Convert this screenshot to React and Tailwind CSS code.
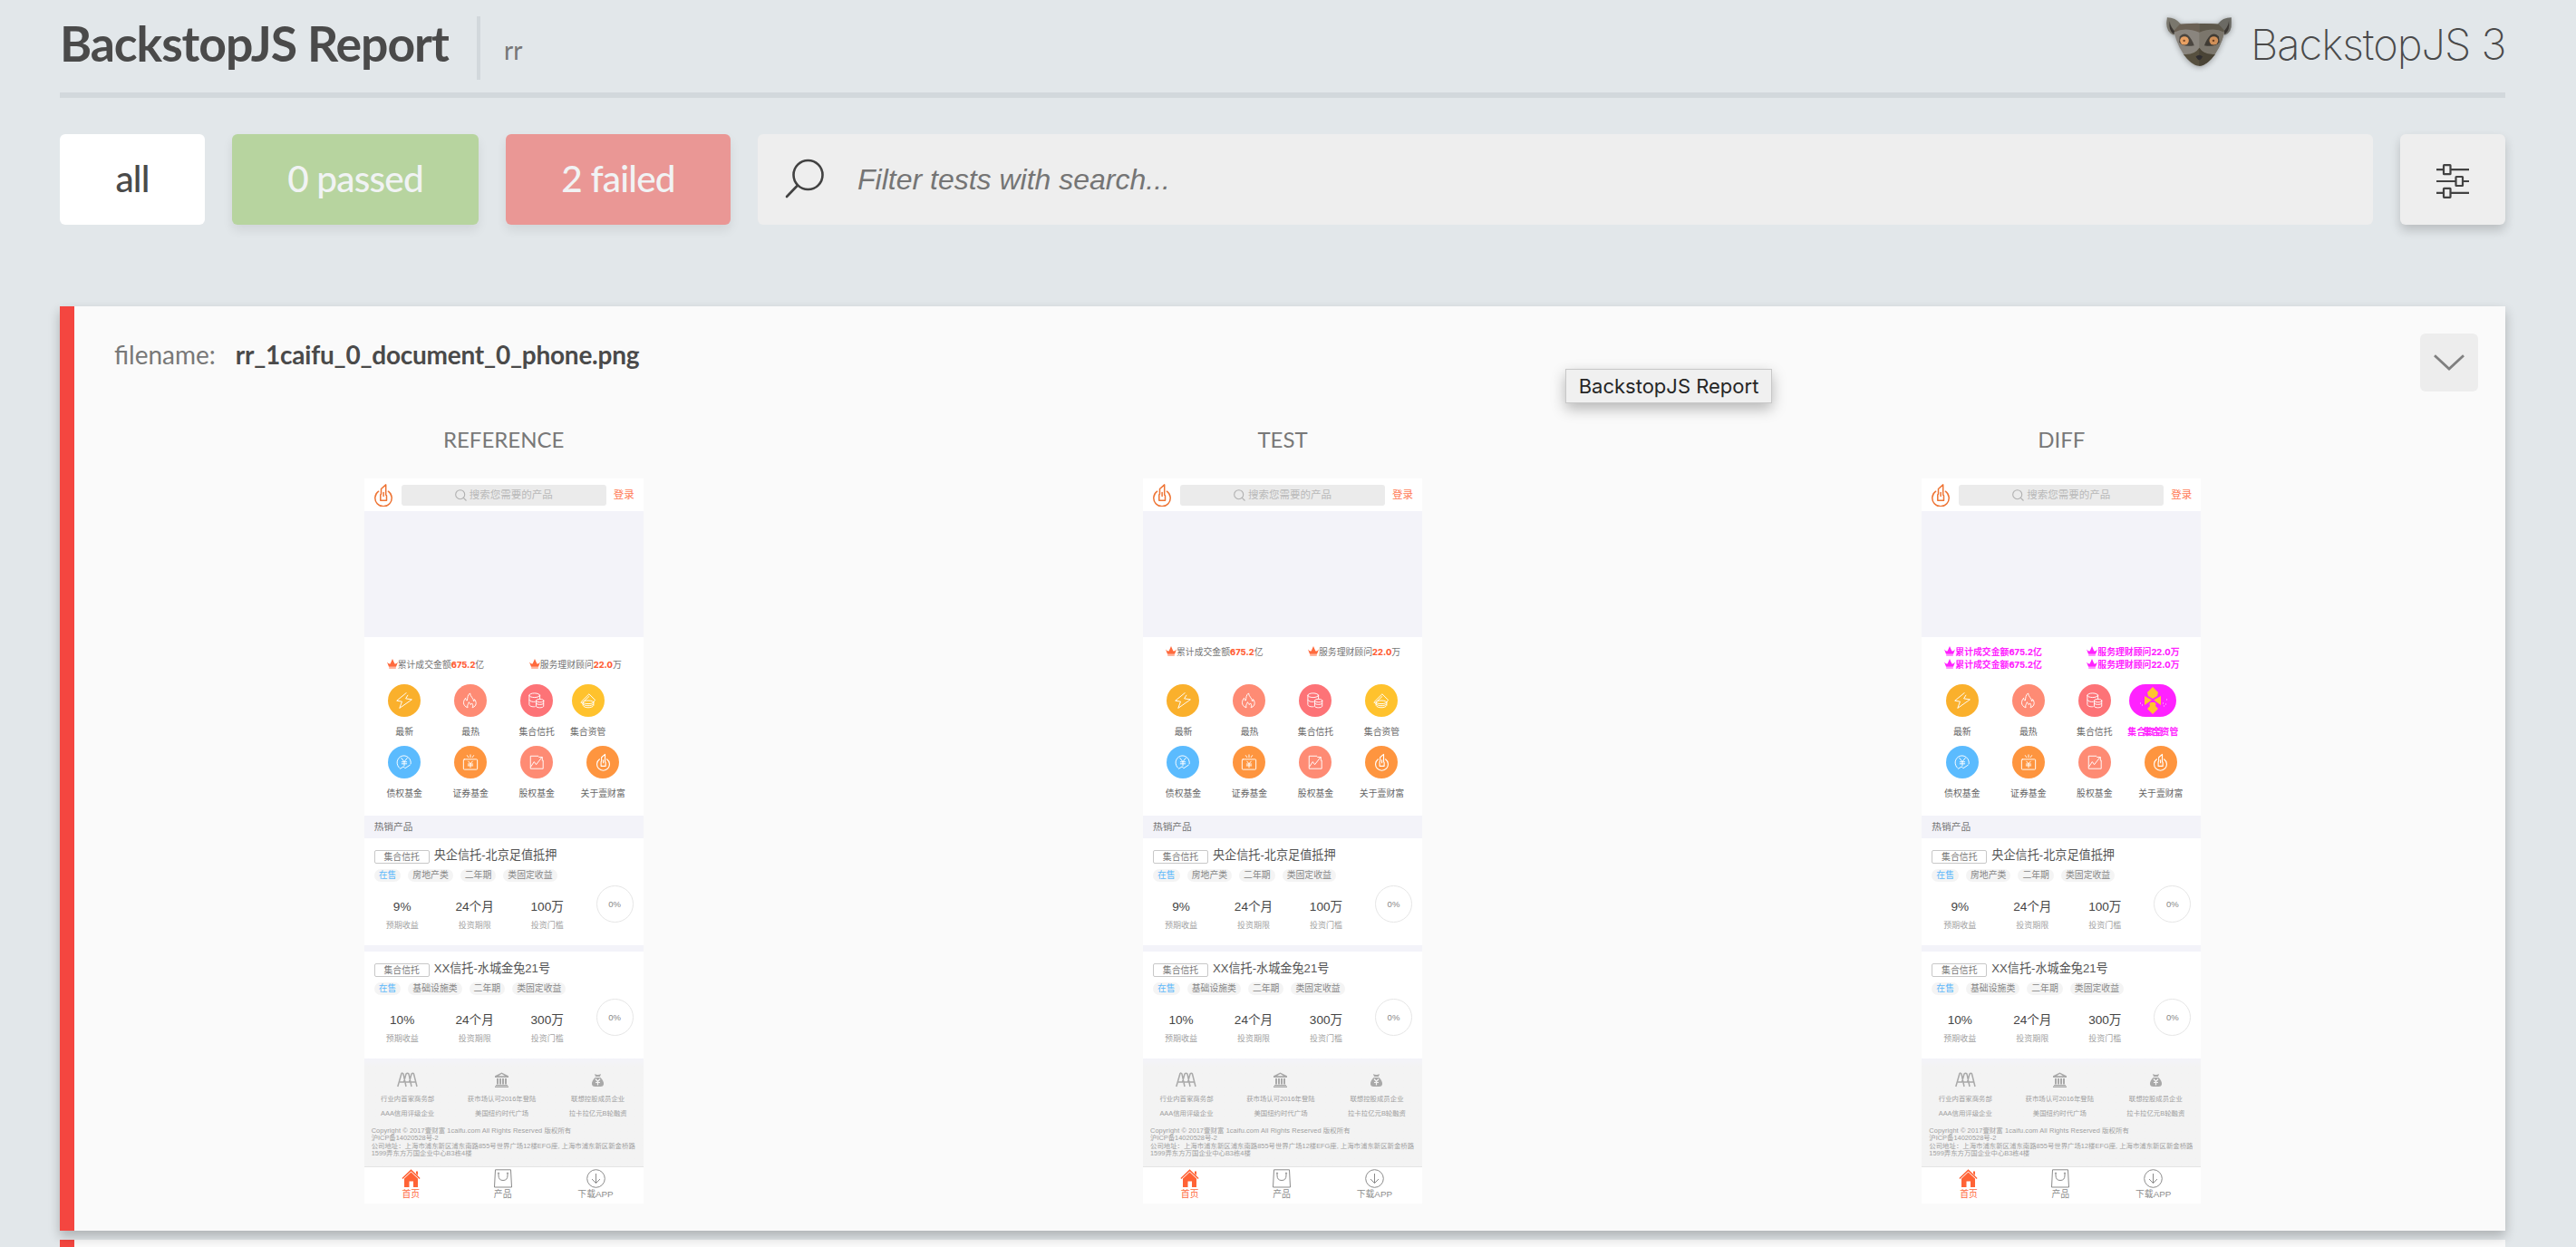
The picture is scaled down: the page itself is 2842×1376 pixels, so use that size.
import React from "react";

const CJK = "font-['Liberation_Sans','Noto_Sans_CJK_SC',sans-serif]";

function LemurLogo() {
  return (
    <svg className="w-[80px] h-[62px] drop-shadow-[0_1px_3px_rgba(0,0,0,0.35)]" viewBox="250 50 230 185" preserveAspectRatio="none">
      <path d="M264 60 Q290 60 308 82 L285 118 Q262 108 262 78 Z" fill="#7a776d" />
      <path d="M468 60 Q440 60 424 82 L447 118 Q470 108 468 78 Z" fill="#6b6a64" />
      <path d="M272 72 Q274 92 292 110 L284 114 Q268 102 272 72 Z" fill="#3b3733" />
      <path d="M460 72 Q458 92 440 110 L448 114 Q464 102 460 72 Z" fill="#3b3733" />
      <path d="M304 82 Q366 78 428 82 L446 108 Q434 160 404 196 Q384 219 366 219 Q348 219 328 196 Q298 160 286 108 Z" fill="#8a857e" />
      <path d="M366 80 Q400 79 428 82 L446 108 Q434 160 404 196 Q384 219 366 219 Z" fill="#7b766c" />
      <path d="M304 82 Q366 78 366 80 V109 Q320 90 288 108 L287 102 Z" fill="#6b6154" />
      <path d="M366 80 Q400 79 428 82 L445 102 L444 108 Q412 90 366 109 Z" fill="#5d574a" />
      <path d="M366 160 Q352 184 316 181 Q342 218 366 219 Q390 218 416 181 Q380 184 366 160 Z" fill="#57503f" />
      <path d="M366 160 Q380 184 416 181 Q390 218 366 219 Z" fill="#4a4436" />
      <path d="M304 122 Q316 108 330 118 Q342 130 350 152 Q312 158 302 140 Z" fill="#4a453f" />
      <path d="M428 122 Q416 108 402 118 Q390 130 382 152 Q420 158 430 140 Z" fill="#3f3b34" />
      <circle cx="319" cy="136" r="14" fill="#e8a063" />
      <circle cx="412" cy="136" r="14" fill="#cf8f58" />
      <circle cx="318" cy="136" r="3.5" fill="#7a4a2a" />
      <circle cx="411" cy="136" r="3.5" fill="#6b4023" />
      <path d="M355 189 Q366 178 377 189 Q371 200 366 200 Q361 200 355 189 Z" fill="#2f2d30" />
    </svg>
  );
}

function Crown({ color }) {
  return (
    <svg className="w-[12px] h-[12px] shrink-0" viewBox="0 0 12 12">
      <path d="M0 3.6 Q2.5 6.6 3.8 5 L6 0 L8.200 5 Q9.500 6.600 12 3.600 L10 8.800 H2 Z M2.200 9.500 H9.800 V10.600 H2.200 Z" fill={color} />
    </svg>
  );
}

function FlameMark({ className, color, width }) {
  return (
    <svg className={className} viewBox="0 0 20 25" fill="none" stroke={color} strokeWidth={width} strokeLinejoin="round" strokeLinecap="round">
      <path d="M4.600 8.200 A9.200 9.200 0 1 0 15.400 8.200" />
      <path d="M6.800 18.300 V12 L7.500 11 V5.500 L12.700 .9 V12 L13.500 13 V18.300 Z" />
      <path d="M10.100 9.500 V13.500" />
    </svg>
  );
}

const glyphs = {
  bolt: <path d="M12.500 .6 L.8 10.200 L7.200 11.300 L4.200 19.400 L19.300 8.800 L11.800 7.600 L14.300 3.500" />,
  fire: (
    <>
      <path d="M6 18.5 C0 16 1 10.5 4 7 C4 9 5 10 6 10 C6.5 6.5 6.500 3 9.500 1 C9.500 5 14 7 14 11 C15 10 15 9 15 8.500 C18 12 17.500 17 13 18.500" />
      <path d="M6.500 18.500 C5.500 15 8 14.500 8 12 C9.500 13 10 14 10 15 L12 13.500 C13.500 16 13.500 17.500 12.500 18.500" />
    </>
  ),
  coins: (
    <>
      <ellipse cx="7.500" cy="3.600" rx="6.500" ry="2.600" />
      <path d="M1 3.600 V15 C1 17 5 18 8 17.500 M14 3.600 V8 M1 9.300 C2 11 5 12 8 11.500" />
      <ellipse cx="14" cy="10.200" rx="4.600" ry="1.900" />
      <path d="M9.400 10.200 V17 C10 19.300 18 19.300 18.600 17 V10.200 M9.400 13.500 C11 15.500 17 15.500 18.600 13.500" />
    </>
  ),
  hat: (
    <>
      <path d="M1 12 L11 2 L18.500 9.500 L16 12 M3.500 12 L11 5" />
      <ellipse cx="10" cy="12" rx="6.500" ry="2" />
      <path d="M3.500 12 V16 C5 19.500 15 19.500 16.500 16 V12 M3.500 14.500 C6 17 14 17 16.500 14.500 M1.500 12.500 L3.500 14" />
    </>
  ),
  yuan: (
    <>
      <path d="M4 17 A8.500 8.500 0 1 1 18 12" />
      <path d="M6.500 5 L10 9.500 L13.500 5 M10 9.500 V14.500 M7 9.700 H13 M7 12 H13 M5 18 L9 15.500 L11 17.500 L17 13.500" />
    </>
  ),
  purse: (
    <>
      <rect x="1.500" y="6.500" width="17" height="12.500" rx="1" />
      <path d="M7.500 9 L10 12 L12.500 9 M10 12 V16.500 M7 12.300 H13 M7 14.300 H13 M10 1 V4 M6 1.800 L7.500 4 M14 1.800 L12.500 4" />
    </>
  ),
  chart: <path d="M12 2.500 H2.500 V18 H18 V8 M3 15.500 L7 9.500 L9.500 13 L16.500 4 M13 3.800 H17 V8" />,
};

function Glyph({ name, color = "#ffffff" }) {
  return (
    <svg className="w-[18px] h-[18px]" viewBox="0 0 20 20" fill="none" stroke={color} strokeWidth="1.05" strokeLinejoin="round" strokeLinecap="round">
      {glyphs[name]}
    </svg>
  );
}

function Feature({ name, label, bg, narrow }) {
  return (
    <div className={"flex flex-col items-center " + (narrow ? "w-[40px]" : "w-[73px]")}>
      <div className={"flex items-center justify-center w-[36px] h-[36px] rounded-full " + bg}>
        {name === "mark" ? <FlameMark className="w-[15px] h-[20px]" color="#ffffff" width="1.5" /> : <Glyph name={name} />}
      </div>
      <div className="mt-[9px] h-[15px] leading-[15px] text-[9.86px] text-[#666] whitespace-nowrap">{label}</div>
    </div>
  );
}

function ChangedFeature() {
  return (
    <div className="relative flex flex-col items-center w-[56px]">
      <svg className="w-[52px] h-[36px]" viewBox="0 0 52 36">
        <rect width="52" height="36" rx="18" fill="#ff22ff" />
        <path d="M26 3 L32 9 L31 13 L26 16 L21 13 L20 9 Z M17 13 L25 17.500 L17 23 Z M35 13 L27 17.500 L35 23 Z M22 20 L30 20 L29 24 L32 27 L26 33 L20 27 L23 24 Z" fill="#ffc42e" />
        <path d="M18 25 L26 17 L34 25" stroke="#ff22ff" strokeWidth="1.2" fill="none" />
        <path d="M12 21 h1 M14 23 h1 M37 21 h1 M40 22 h1 M41 17 h1 M38 24 h1" stroke="#ffd6ff" />
      </svg>
      <div className="mt-[9px] h-[15px] w-[56px] leading-[15px] text-[9.86px] font-bold text-[#ff22ff] whitespace-nowrap">集合资管</div>
      <div className="absolute top-[45px] right-0 leading-[15px] text-[9.86px] font-bold text-[#ff22ff] whitespace-nowrap">集合资管</div>
    </div>
  );
}

function Stats({ changed }) {
  const tone = changed ? "text-[#ff22ff] font-bold" : "text-[#757575]";
  const num = changed
    ? "font-extrabold font-[Inter,sans-serif] text-[9.3px]"
    : "font-extrabold font-[Inter,sans-serif] text-[9.3px] text-[#ff5e36]";
  const color = changed ? "#ff22ff" : "#ff6a3d";
  return (
    <div className={"flex h-[14px] leading-[14px] text-[9.86px] whitespace-nowrap pl-[25px] " + tone}>
      <div className="flex w-[157px]">
        <Crown color={color} />
        <span>累计成交金额<b className={num}>675.2</b>亿</span>
      </div>
      <div className="flex">
        <Crown color={color} />
        <span>服务理财顾问<b className={num}>22.0</b>万</span>
      </div>
    </div>
  );
}

function Metric({ value, label }) {
  return (
    <div className="w-[80px] flex flex-col items-center whitespace-nowrap">
      <div className="text-[13.6px] leading-[18px] text-[#444]">{value}</div>
      <div className="mt-[4px] text-[9px] leading-[14px] text-[#a2a2a2]">{label}</div>
    </div>
  );
}

function Product({ title, tags, rate, min }) {
  return (
    <div className="h-[118px] bg-white pl-[11px] pt-[10px]">
      <div className="flex items-center h-[17px] whitespace-nowrap">
        <div className="w-[61px] h-[15px] mt-[3px] border border-[#c8c8c8] rounded-[2px] text-center text-[9.86px] leading-[13px] text-[#777]">集合信托</div>
        <div className="ml-[5px] text-[13.14px] leading-[17px] text-[#555]">{title}</div>
      </div>
      <div className="flex gap-[8px] mt-[7px] h-[14px] text-[9.86px] leading-[13px] whitespace-nowrap">
        {tags.map((t, i) => (
          <div key={t} className={"px-[5px] rounded-full bg-[#f4f4f4] " + (i === 0 ? "text-[#5cb8fb]" : "text-[#858585]")}>{t}</div>
        ))}
      </div>
      <div className="flex">
        <div className="flex mt-[19px] ml-[-9px] w-[254px]">
          <Metric value={rate} label="预期收益" />
          <Metric value="24个月" label="投资期限" />
          <Metric value={min} label="投资门槛" />
        </div>
        <div className="w-[41px] h-[41px] mt-[4px] rounded-full border-[1.500px] border-[#e6e6e6] text-center text-[9.500px] leading-[39px] text-[#888]">0%</div>
      </div>
    </div>
  );
}

const awardIcons = [
  <svg key="a" className="w-[23px] h-[17px]" viewBox="0 0 23 17" fill="none" stroke="#a9a9a9" strokeWidth="1.5">
    <path d="M.8 16 L5 1.500 Q6 .5 7 2 L10 16 M3 11 H8 M7.500 11 L10 2 Q11.500 .3 13 2 L16 16 M9 11 H14.500 M13.500 11 L16 2 Q17.500 .3 18.500 2 L22 16 M15 11 H21" />
  </svg>,
  <svg key="b" className="w-[17px] h-[17px]" viewBox="0 0 17 17" fill="#a9a9a9">
    <path d="M8.500 .5 L16 4.300 V6 H1 V4.300 Z M8.500 2 L5 4.300 H12 Z M3 7 H5 V13.500 H3 Z M6 7 H8 V13.500 H6 Z M9 7 H11 V13.500 H9 Z M12 7 H14 V13.500 H12 Z M2 14 H15 V15 H2 Z M1 15.500 H16 V17 H1 Z" fillRule="evenodd" />
  </svg>,
  <svg key="c" className="w-[15px] h-[17px]" viewBox="0 0 15 17">
    <path d="M4 2 Q7.500 4 11 2 L10 5 H5 Z M4.500 6 H10.500 Q14.500 10 14 13.500 Q13.500 16 10.500 16 H4.500 Q1.500 16 1 13.500 Q.5 10 4.500 6 Z" fill="#a9a9a9" />
    <path d="M5 7.500 L7.500 10.500 L10 7.500 M7.500 10.500 V14.500 M5 11.500 H10" stroke="#f3f3f3" strokeWidth="1.200" fill="none" />
  </svg>,
];

const awards = [
  ["行业内首家商务部", "AAA信用评级企业"],
  ["获市场认可2016年登陆", "美国纽约时代广场"],
  ["联想控股成员企业", "拉卡拉亿元B轮融资"],
];

const awardWidths = ["w-[90px]", "w-[118px]", "w-[94px]"];

function PhoneFooter() {
  return (
    <>
      <div className="h-[120px] bg-linear-to-b from-[#f3f3f9] to-[#f3f3f3] to-8% border-b border-[#e4e4e4]">
        <div className="flex pl-[3px] pt-[15px]">
          {awards.map(([a, b], i) => (
            <div key={a} className={"flex flex-col items-center text-[7.400px] text-[#a0a0a0] whitespace-nowrap " + awardWidths[i]}>
              {awardIcons[i]}
              <div className="mt-[7px] leading-[12px]">{a}</div>
              <div className="mt-[4px] leading-[12px]">{b}</div>
            </div>
          ))}
        </div>
        <div className="pl-[8px] mt-[9px] text-[7.400px] leading-[8.300px] text-[#a0a0a0] whitespace-nowrap">
          <div className="tracking-[0.09px]">Copyright © 2017壹财富 1caifu.com All Rights Reserved 版权所有</div>
          <div>沪ICP备14020528号-2</div>
          <div>公司地址：上海市浦东新区浦东南路855号世界广场12楼EFG座, 上海市浦东新区新金桥路</div>
          <div>1599弄东方万国企业中心B3栋4楼</div>
        </div>
      </div>
      <div className="flex h-[40px] bg-white text-[9.86px] leading-[14px] text-[#8c8c8c] whitespace-nowrap pt-[2px]">
        <div className="w-[104px] flex flex-col items-center text-[#ff6a3d]">
          <svg className="w-[21px] h-[21px]" viewBox="0 0 21 21">
            <path d="M10.500 .3 L20.600 10 L19.600 11 L10.500 2.500 L1.400 11 L.4 10 Z M10.500 3.500 L18 10.500 V20 H13 V13.500 H8.500 V20 H3 V10.500 Z M16 2.500 H18 V7 L16 5 Z" fill="#ff6336" />
          </svg>
          <div>首页</div>
        </div>
        <div className="w-[100px] flex flex-col items-center">
          <svg className="w-[20px] h-[21px]" viewBox="0 0 20 21" fill="none" stroke="#8a8a8a" strokeWidth="1">
            <path d="M1.500 .8 H18.500 L19.500 20 H.5 Z M5 5 V7 Q5 12.500 10 12.500 Q15 12.500 15 7 V5" />
            <circle cx="5" cy="4.500" r=".6" />
            <circle cx="15" cy="4.500" r=".6" />
          </svg>
          <div>产品</div>
        </div>
        <div className="w-[106px] flex flex-col items-center">
          <svg className="w-[21px] h-[21px]" viewBox="0 0 21 21" fill="none" stroke="#8a8a8a" strokeWidth="1">
            <circle cx="10.500" cy="10.500" r="9.800" />
            <path d="M10.500 5 V15.500 M6 11 L10.500 15.500 L15 11" />
          </svg>
          <div>下载APP</div>
        </div>
      </div>
    </>
  );
}

function Phone({ variant }) {
  return (
    <div className={"w-[308px] h-[800px] bg-white overflow-hidden text-left " + CJK}>
      <div className="flex items-center h-[36px]">
        <FlameMark className="w-[20px] h-[25px] ml-[11px]" color="#ee7434" width="1.500" />
        <div className="flex items-center justify-center w-[226px] h-[23px] ml-[10px] rounded-[3px] bg-[#ebebeb] text-[11.500px] leading-[23px] text-[#b9b9b9] whitespace-nowrap">
          <svg className="w-[13px] h-[13px] mr-[3px]" viewBox="0 0 13 13" fill="none" stroke="#b0b0b0" strokeWidth="1.100">
            <circle cx="5.700" cy="5.700" r="5" />
            <path d="M9.300 9.300 L12.500 12.500" />
          </svg>
          搜索您需要的产品
        </div>
        <div className="ml-[8px] text-[11.500px] leading-[23px] text-[#ff7a55] whitespace-nowrap">登录</div>
      </div>
      <div className="h-[139px] bg-[#f3f3f9]" />
      <div className="flex flex-col h-[52px] pt-[10px]">
        {variant === "reference" ? <div className="h-[14px]" /> : <Stats changed={variant === "diff"} />}
        {variant !== "test" && <Stats changed={variant === "diff"} />}
      </div>
      <div className="h-[145px] pl-[8px]">
        <div className="flex h-[68px]">
          <Feature name="bolt" label="最新" bg="bg-[#fab02c]" />
          <Feature name="fire" label="最热" bg="bg-[#fe8b74]" />
          <Feature name="coins" label="集合信托" bg="bg-[#fd7377]" />
          {variant === "reference" && <Feature name="hat" label="集合资管" bg="bg-[#ffc22d]" narrow />}
          {variant === "test" && <Feature name="hat" label="集合资管" bg="bg-[#ffc22d]" />}
          {variant === "diff" && <ChangedFeature />}
        </div>
        <div className="flex">
          <Feature name="yuan" label="债权基金" bg="bg-[#5bbbfe]" />
          <Feature name="purse" label="证券基金" bg="bg-[#fe953f]" />
          <Feature name="chart" label="股权基金" bg="bg-[#fe8b74]" />
          <Feature name="mark" label="关于壹财富" bg="bg-[#fe953f]" />
        </div>
      </div>
      <div className="h-[25px] pl-[11px] bg-[#f3f3f9] text-[10.700px] leading-[25px] text-[#757575]">热销产品</div>
      <Product title="央企信托-北京足值抵押" tags={["在售", "房地产类", "二年期", "类固定收益"]} rate="9%" min="100万" />
      <div className="h-[7px] bg-[#f3f3f9]" />
      <Product title="XX信托-水城金兔21号" tags={["在售", "基础设施类", "二年期", "类固定收益"]} rate="10%" min="300万" />
      <PhoneFooter />
    </div>
  );
}

function Shot({ title, variant }) {
  return (
    <div className="flex-1 flex flex-col items-center">
      <div className="h-[30px] text-[24px] leading-[29px] text-[#787878]">{title}</div>
      <div className="mt-[28px]">
        <Phone variant={variant} />
      </div>
    </div>
  );
}

export default function App() {
  return (
    <div className="w-[2842px] h-[1376px] overflow-hidden bg-[#e2e7ea] pl-[66px] pr-[78px] font-[Lato,sans-serif] text-[#4a4a4a]">
      <header className="flex h-[108px] border-b-[6px] border-[#d2d8dc]">
        <h1 className="w-[460px] text-[53.5px] leading-[60px] pt-[17px] font-bold whitespace-nowrap tracking-[-1.05px]">BackstopJS Report</h1>
        <div className="mt-[18px] h-[70px] border-l-4 border-[#d2d8dc] pl-[26px] text-[28px] leading-[34px] pt-[20px] text-[#787878]">rr</div>
        <div className="ml-auto flex">
          <div className="mt-[16px]"><LemurLogo /></div>
          <div className="w-[298px] pt-[19px] pl-[17px] text-[47px] leading-[60px] font-[Inter,sans-serif] font-extralight whitespace-nowrap tracking-[-1px]">BackstopJS 3</div>
        </div>
      </header>

      <div className="flex h-[100px] mt-[40px] text-[40.5px] leading-[98px] text-center font-medium tracking-[-0.8px]">
        <div className="w-[160px] rounded-[6px] bg-white">all</div>
        <div className="w-[272px] ml-[30px] rounded-[6px] bg-[#b7d49f] text-[#f1f3f4] shadow-[0_6px_12px_rgba(0,0,0,0.08)]">0 passed</div>
        <div className="w-[248px] ml-[30px] rounded-[6px] bg-[#ea9795] text-[#f1f3f4] shadow-[0_6px_12px_rgba(0,0,0,0.08)]">2 failed</div>
        <div className="flex flex-1 ml-[30px] rounded-[6px] bg-[#eeeeee]">
          <svg className="w-[44px] h-[44px] mt-[27px] ml-[30px]" viewBox="0 0 44 44" fill="none" stroke="#424242" strokeWidth="2.600" strokeLinecap="round">
            <circle cx="25.500" cy="18" r="16" />
            <path d="M13.500 30 L2 42" />
          </svg>
          <div className="ml-[36px] text-[32px] leading-[101px] font-normal tracking-normal italic text-[#757575] font-['Liberation_Sans',Arial,sans-serif]">Filter tests with search...</div>
        </div>
        <div className="flex items-center justify-center w-[116px] ml-[30px] rounded-[6px] bg-[#eeeeee] shadow-[0_6px_12px_rgba(0,0,0,0.18)]">
          <svg className="w-[36px] h-[38px] mt-[4px]" viewBox="0 0 36 38" fill="none" stroke="#424242" strokeWidth="2.200">
            <path d="M0 6.200 H8 M15.500 6.200 H36 M0 19 H21.500 M29 19 H36 M0 31.800 H8 M15.500 31.800 H36" />
            <rect x="8" y="1.200" width="7.500" height="10" rx=".5" />
            <rect x="21.500" y="14" width="7.500" height="10" rx=".5" />
            <rect x="8" y="26.800" width="7.500" height="10" rx=".5" />
          </svg>
        </div>
      </div>

      <section className="relative h-[1020px] mt-[90px] border-l-[16px] border-[#f44640] bg-[#fafafa] pl-[44px] pr-[60px] shadow-[0_6px_12px_rgba(0,0,0,0.24)]">
        <div className="flex h-[132px] pt-[36px] text-[28px] leading-[34px] whitespace-nowrap">
          <span className="text-[#787878]">filename:</span>
          <b className="ml-[22px] tracking-[-0.23px]">rr_1caifu_0_document_0_phone.png</b>
        </div>
        <div className="flex">
          <Shot title="REFERENCE" variant="reference" />
          <Shot title="TEST" variant="test" />
          <Shot title="DIFF" variant="diff" />
        </div>
        <div className="absolute right-[30px] top-[30px] flex items-center justify-center w-[64px] h-[64px] rounded-[6px] bg-[#ededed]">
          <svg className="w-[34px] h-[18px]" viewBox="0 0 34 18" fill="none" stroke="#808080" strokeWidth="2.800">
            <path d="M1 1.200 L17 16 L33 1.200" />
          </svg>
        </div>
        <div className="absolute left-[1645px] top-[69px] w-[228px] h-[38px] border border-[#c8c8c8] bg-[#f0f0f0] text-center text-[22px] leading-[36px] text-[#262626] whitespace-nowrap font-[Inter,sans-serif] shadow-[0_6px_16px_rgba(0,0,0,0.28)]">BackstopJS Report</div>
      </section>

      <section className="h-[100px] mt-[10px] border-l-[16px] border-[#f44640] bg-[#fafafa]" />
    </div>
  );
}
